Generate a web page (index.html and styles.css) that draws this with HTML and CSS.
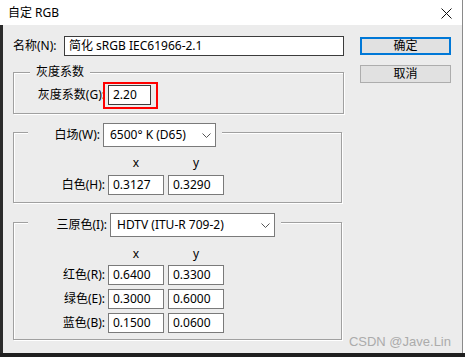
FILE: index.html
```html
<!DOCTYPE html>
<html lang="zh-CN">
<head>
<meta charset="utf-8">
<title>自定 RGB</title>
<link rel="stylesheet" href="styles.css">
</head>
<body>
<div class="screen">
  <div class="window">
    <div class="titlebar">
      <span class="title">自定 RGB</span>
      <svg class="close" width="11" height="11" viewBox="0 0 11 11"><path d="M0.5 0.5 L10.5 10.5 M10.5 0.5 L0.5 10.5" stroke="#111" stroke-width="1" fill="none"/></svg>
    </div>
    <div class="main">
      <div class="edge-left"></div>
      <div class="dialog">
        <div class="form">
          <div class="name-row">
            <span class="name-label">名称(N):</span>
            <div class="field name-field">简化 sRGB IEC61966-2.1</div>
          </div>

          <div class="group group-gamma">
            <div class="legend legend-text">灰度系数</div>
            <div class="row">
              <span class="row-label">灰度系数(G):</span>
              <div class="highlight"><div class="field gamma-field">2.20</div></div>
            </div>
          </div>

          <div class="group group-white">
            <div class="legend legend-combo">
              <span class="combo-label white-label">白场(W):</span>
              <div class="select white-select"><span>6500° K (D65)</span><svg class="chev" width="9" height="5" viewBox="0 0 9 5"><path d="M0.5 0.5 L4.5 4.5 L8.5 0.5" stroke="#555" fill="none"/></svg></div>
            </div>
            <div class="heads"><span class="head-spacer"></span><span class="head">x</span><span class="head">y</span></div>
            <div class="row coords">
              <span class="row-label">白色(H):</span>
              <div class="field num">0.3127</div>
              <div class="field num">0.3290</div>
            </div>
          </div>

          <div class="group group-prim">
            <div class="legend legend-combo">
              <span class="combo-label prim-label">三原色(I):</span>
              <div class="select prim-select"><span>HDTV (ITU-R 709-2)</span><svg class="chev" width="9" height="5" viewBox="0 0 9 5"><path d="M0.5 0.5 L4.5 4.5 L8.5 0.5" stroke="#555" fill="none"/></svg></div>
            </div>
            <div class="heads heads-prim"><span class="head-spacer"></span><span class="head">x</span><span class="head">y</span></div>
            <div class="row coords first">
              <span class="row-label">红色(R):</span>
              <div class="field num">0.6400</div>
              <div class="field num">0.3300</div>
            </div>
            <div class="row coords">
              <span class="row-label">绿色(E):</span>
              <div class="field num">0.3000</div>
              <div class="field num">0.6000</div>
            </div>
            <div class="row coords">
              <span class="row-label">蓝色(B):</span>
              <div class="field num">0.1500</div>
              <div class="field num">0.0600</div>
            </div>
          </div>
        </div>

        <div class="buttons">
          <div class="btn btn-default">确定</div>
          <div class="btn">取消</div>
        </div>

        <div class="watermark">CSDN @Jave.Lin</div>
      </div>
    </div>
  </div>
  <div class="bottom"></div>
</div>
</body>
</html>
```
FILE: styles.css
```css
html, body {
  margin: 0;
  padding: 0;
  background: #ffffff;
}
body {
  font-family: "Noto Sans", "Noto Sans CJK SC", sans-serif;
  font-size: 12px;
  line-height: 16px;
  color: #000;
}
.screen {
  width: 465px;
  height: 357px;
  display: flex;
  flex-direction: column;
  overflow: hidden;
}
.window {
  width: 462px;
  border-right: 1px solid #8a8a8a;
  display: flex;
  flex-direction: column;
}
.titlebar {
  height: 25px;
  background: #fff;
  display: flex;
  align-items: center;
  justify-content: space-between;
  padding: 0 10px 0 8px;
}
.title {
  font-size: 12px;
  line-height: 16px;
}
.close {
  display: block;
  margin-top: 1px;
}
.main {
  height: 328px;
  display: flex;
}
.edge-left {
  width: 3px;
  background: #2b2b2b;
}
.dialog {
  flex: 1;
  background: #ececec;
  display: flex;
  padding: 11px 0 0 10px;
  position: relative;
}
.form {
  width: 331px;
  display: flex;
  flex-direction: column;
}
.name-row {
  display: flex;
  align-items: center;
  height: 20px;
}
.name-label {
  width: 51px;
}
.field {
  box-sizing: border-box;
  background: #fff;
  border: 1px solid #7a7a7a;
  height: 20px;
  line-height: 18px;
  padding-left: 4px;
  white-space: nowrap;
}
.name-field {
  width: 280px;
  border-color: #3c3c3c;
}
.group {
  border: 1px solid #a0a0a0;
  box-shadow: 1px 1px 0 #fff, inset 1px 1px 0 #fff;
  width: 329px;
  box-sizing: border-box;
  display: flex;
  flex-direction: column;
}
.group-gamma {
  margin-top: 16px;
  width: 331px;
  padding-bottom: 8px;
}
.group-white {
  margin-top: 18px;
  padding-bottom: 7px;
}
.group-prim {
  margin-top: 19px;
  padding-bottom: 6px;
}
.legend {
  align-self: flex-start;
  background: #ececec;
}
.legend-text {
  margin: -9px 0 0 16px;
  padding: 0 6px;
  height: 16px;
}
.legend-combo {
  margin: -10px 0 0 14px;
  padding-right: 6px;
  display: flex;
  align-items: center;
  height: 24px;
}
.combo-label {
  text-align: right;
  margin-right: 3px;
}
.white-label { width: 72px; }
.prim-label { width: 79px; }
.select {
  box-sizing: border-box;
  height: 24px;
  background: #fff;
  border: 1px solid #7a7a7a;
  display: flex;
  align-items: center;
  justify-content: space-between;
  padding: 0 4px 0 6px;
  white-space: nowrap;
}
.white-select { width: 113px; }
.prim-select { width: 165px; }
.chev { display: block; }
.row {
  display: flex;
  align-items: center;
  height: 20px;
  margin-top: 4px;
}
.group-gamma .row {
  margin-top: 5px;
}
.row-label {
  width: 91px;
  text-align: right;
  margin-right: 3px;
  white-space: nowrap;
}
.highlight {
  position: relative;
}
.highlight::after {
  content: "";
  position: absolute;
  left: -5px;
  top: -3px;
  width: 51px;
  height: 23px;
  border: 2px solid #ff0000;
}
.gamma-field {
  width: 43px;
  border-color: #3c3c3c;
}
.num {
  width: 56px;
  margin-right: 4px;
}
.heads {
  display: flex;
  height: 16px;
  margin-top: 8px;
}
.heads-prim {
  margin-top: 9px;
}
.head-spacer {
  width: 94px;
}
.head {
  width: 56px;
  margin-right: 4px;
  text-align: center;
}
.coords.first {
  margin-top: 3px;
}
.buttons {
  margin-left: 16px;
  padding-top: 1px;
  display: flex;
  flex-direction: column;
}
.btn {
  box-sizing: border-box;
  width: 91px;
  height: 18px;
  background: #e1e1e1;
  border: 1px solid #adadad;
  text-align: center;
  line-height: 16px;
  margin-bottom: 10px;
}
.btn-default {
  border: 2px solid #0078d7;
  line-height: 14px;
}
.watermark {
  position: absolute;
  right: 11px;
  bottom: 3px;
  font-family: "Liberation Sans", Arial, sans-serif;
  font-size: 13px;
  color: #ababab;
  line-height: 16px;
}
.bottom {
  height: 4px;
  background: #1f1f1f;
}
```
